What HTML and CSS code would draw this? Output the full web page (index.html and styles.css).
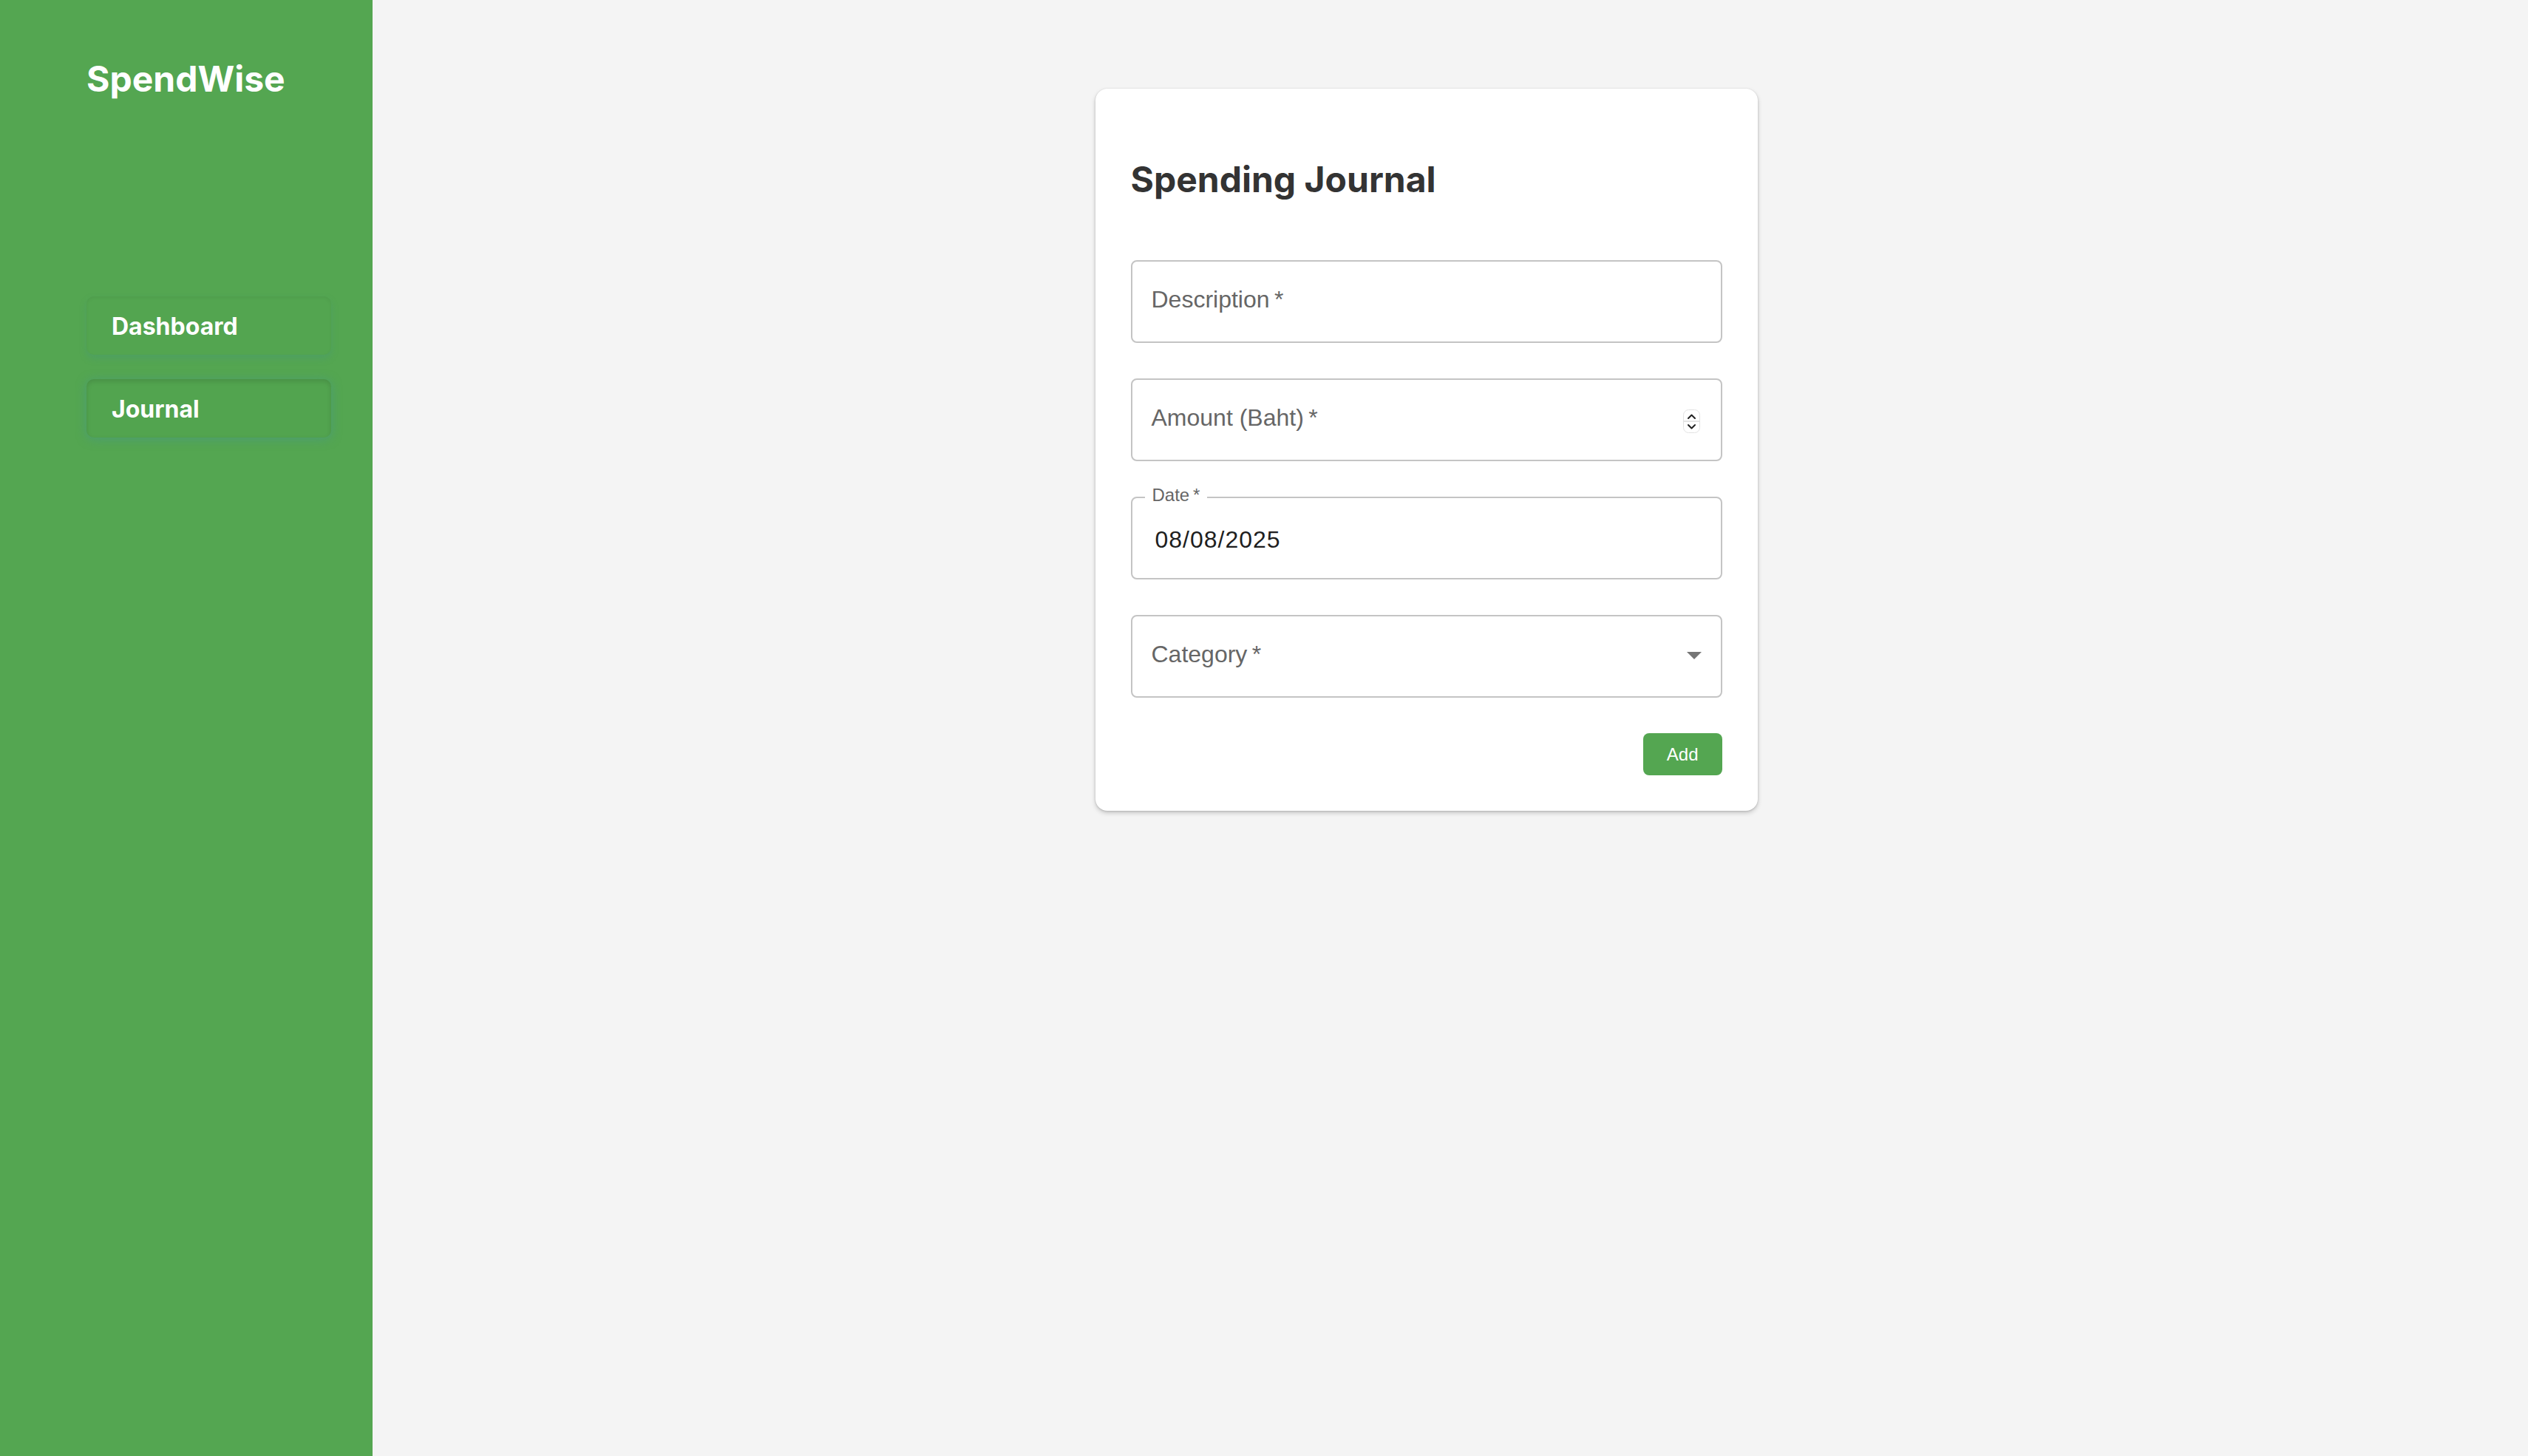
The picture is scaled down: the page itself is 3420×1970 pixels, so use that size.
FILE: index.html
```html
<!DOCTYPE html>
<html lang="en">
<head>
<meta charset="utf-8">
<title>SpendWise – Spending Journal</title>
<link rel="stylesheet" href="styles.css">
</head>
<body>
<div class="app">
  <aside class="sidebar">
    <div class="logo">SpendWise</div>
    <nav class="nav">
      <a class="nav-item">Dashboard</a>
      <a class="nav-item active">Journal</a>
    </nav>
  </aside>
  <main class="main">
    <section class="card">
      <h2 class="card-title">Spending Journal</h2>
      <form class="form">
        <div class="field">
          <span class="label">Description&thinsp;*</span>
        </div>
        <div class="field">
          <span class="label">Amount (Baht)&thinsp;*</span>
          <svg class="spinner" width="23" height="32" viewBox="0 0 23 32">
            <rect x="0.5" y="0.5" width="22" height="31" rx="7" fill="#fff" stroke="#e2e2e2"/>
            <line x1="1" y1="16" x2="22" y2="16" stroke="#dcdcdc" stroke-width="1.5"/>
            <polyline points="7,12 11.5,7.5 16,12" fill="none" stroke="#222" stroke-width="2" stroke-linecap="round" stroke-linejoin="round"/>
            <polyline points="7,21 11.5,25.5 16,21" fill="none" stroke="#222" stroke-width="2" stroke-linecap="round" stroke-linejoin="round"/>
          </svg>
        </div>
        <div class="field field-date">
          <span class="float-label">Date&thinsp;*</span>
          <span class="value">08/08/2025</span>
        </div>
        <div class="field">
          <span class="label">Category&thinsp;*</span>
          <svg class="caret" width="48" height="48" viewBox="0 0 24 24"><path d="M7 10l5 5 5-5z" fill="#757575"/></svg>
        </div>
        <div class="actions">
          <button type="button" class="btn">Add</button>
        </div>
      </form>
    </section>
  </main>
</div>
</body>
</html>
```

FILE: styles.css
```css
* { box-sizing: border-box; }

html, body {
  margin: 0;
  padding: 0;
  height: 100%;
}

body {
  background: #f4f4f4;
  font-family: "Liberation Sans", Arial, sans-serif;
}

.app {
  display: flex;
  min-height: 1970px;
}

.sidebar {
  width: 504px;
  flex: 0 0 504px;
  background: #54a651;
  padding: 78px 55px 0 117px;
  font-family: Inter, "Liberation Sans", sans-serif;
  color: #fff;
}

.logo {
  font-size: 48px;
  font-weight: 700;
  line-height: 58px;
  letter-spacing: 0;
}

.nav {
  margin-top: 265px;
  display: flex;
  flex-direction: column;
  gap: 33px;
}

.nav-item {
  display: block;
  width: 331px;
  padding: 21px 34px 19px;
  font-size: 32px;
  font-weight: 700;
  line-height: 39px;
  color: #fff;
  border-radius: 10px;
  background: #53a550;
  box-shadow: inset 0 2px 4px rgba(0, 0, 0, 0.05), 0 5px 10px rgba(70, 150, 130, 0.35);
  cursor: pointer;
}

.nav-item.active {
  background: #52a44f;
  box-shadow: inset 0 3px 6px rgba(0, 0, 0, 0.12), 0 2px 14px rgba(70, 150, 140, 0.6);
}

.main {
  flex: 1;
  display: flex;
  justify-content: center;
  align-items: flex-start;
  padding: 120px 65px 0 0;
}

.card {
  width: 896px;
  background: #fff;
  border-radius: 16px;
  padding: 0 48px 48px;
  box-shadow: 0 3px 6px rgba(0, 0, 0, 0.18), 0 1px 3px rgba(0, 0, 0, 0.12), 0 0 2px rgba(0, 0, 0, 0.06);
}

.card-title {
  margin: 94px 0 80px;
  font-family: Inter, "Liberation Sans", sans-serif;
  font-size: 48px;
  font-weight: 700;
  line-height: 58px;
  color: #333;
}

.form {
  display: flex;
  flex-direction: column;
  gap: 48px;
}

.field {
  position: relative;
  height: 112px;
  border: 2px solid #c4c4c4;
  border-radius: 8px;
  padding: 33px 28px 0 26px;
  display: flex;
  align-items: flex-start;
  justify-content: space-between;
}

.label {
  font-size: 32px;
  line-height: 36px;
  color: #666;
}

.spinner {
  margin-top: 7px;
  margin-right: 0;
}

.caret {
  margin-top: -5px;
  margin-right: -16px;
}

.field-date {
  padding-top: 38px;
  padding-left: 31px;
}

.float-label {
  position: absolute;
  top: -16px;
  left: 17px;
  padding: 0 10px;
  background: #fff;
  font-size: 24px;
  line-height: 24px;
  color: #666;
}

.value {
  font-size: 32px;
  line-height: 36px;
  letter-spacing: 1px;
  color: #1e1e1e;
}

.actions {
  display: flex;
  justify-content: flex-end;
}

.btn {
  height: 57px;
  padding: 0 32px;
  border: none;
  border-radius: 8px;
  background: #54a651;
  color: #fff;
  font-family: "Liberation Sans", Arial, sans-serif;
  font-size: 24px;
  line-height: 57px;
  cursor: pointer;
}
```
